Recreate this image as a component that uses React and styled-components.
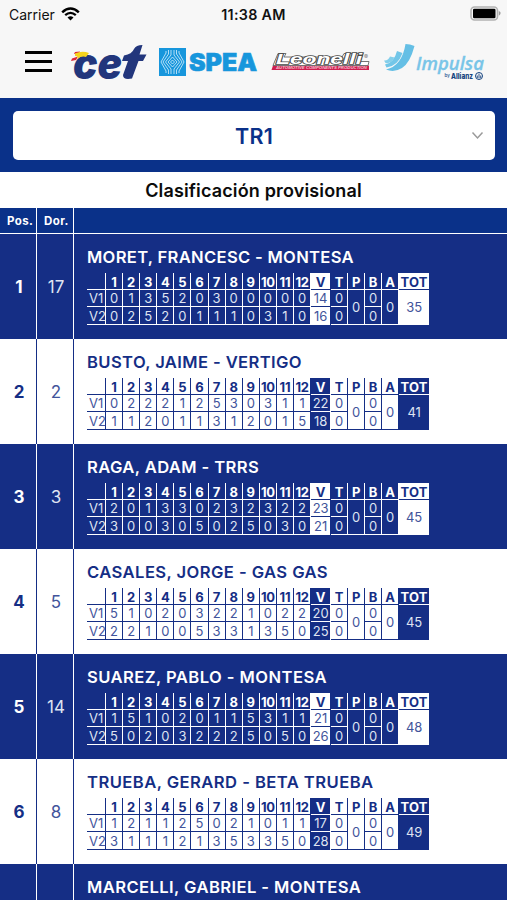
import {createGlobalStyle, styled} from 'styled-components'

const NAVY = '#152e85'
const BLUE = '#0a3189'

const GlobalStyle = createGlobalStyle`
  * {
    box-sizing: border-box;
  }

  body {
    margin: 0;
    background: #fff;
    font-family: Inter, 'Liberation Sans', sans-serif;
  }
`

const Screen = styled.div`
  width: 507px;
  height: 900px;
  overflow: hidden;
`

const StatusBar = styled.div`
  display: grid;
  grid-template-columns: 1fr auto 1fr;
  align-items: center;
  height: 28px;
  padding: 0 6px 0 9px;
  background: #f7f7f7;
  color: #111;
  font-size: 14px;
`

const Carrier = styled.div`
  display: flex;
  align-items: center;
  gap: 6px;
  height: 26px;

  svg {
    margin-bottom: 1px;
  }
`

const Clock = styled.div`
  margin-left: -3px;
  font-size: 14.3px;
  font-weight: 600;
  letter-spacing: 0.3px;
`

const Battery = styled.svg`
  justify-self: end;
  margin-bottom: 2px;
`

const LogoBar = styled.header`
  display: flex;
  align-items: flex-start;
  height: 70px;
  padding: 10px 0 0 25px;
  background: #f7f7f7;
`

const MenuButton = styled.button`
  display: flex;
  flex-direction: column;
  gap: 6px;
  width: 27px;
  margin: 13px 15px 0 0;
  padding: 0;
  border: 0;
  background: none;
  cursor: pointer;

  span {
    width: 27px;
    height: 3px;
    background: #000;
  }
`

const Logos = styled.svg`
  display: block;
`

const SelectBar = styled.div`
  height: 74px;
  padding: 13px 12px 0 13px;
  background: ${BLUE};
`

const Select = styled.div`
  display: grid;
  grid-template-columns: 1fr auto 1fr;
  align-items: center;
  height: 49px;
  padding: 0 11px;
  border-radius: 5px;
  background: #fff;
  color: ${BLUE};
  font-size: 21.5px;
  font-weight: 600;
  letter-spacing: 0.3px;
`

const Chevron = styled.svg`
  grid-column: 3;
  justify-self: end;
`

const SelectValue = styled.span`
  grid-column: 2;
`

const Title = styled.h1`
  height: 36px;
  margin: 0;
  color: #0b0b0b;
  font-size: 18px;
  font-weight: 600;
  letter-spacing: 0.15px;
  line-height: 37px;
  text-align: center;
`

const TableHead = styled.div`
  display: grid;
  grid-template-columns: 37px 37px 1fr;
  height: 26px;
  border-bottom: 1px solid #fff;
  background: ${BLUE};
  color: #fff;
  font-size: 11.5px;
  font-weight: 700;
  line-height: 26px;
`

const HeadCell = styled.div`
  padding-left: 7px;
  border-right: 1px solid #fff;
  letter-spacing: 0.4px;
`

const Row = styled.div`
  --bg: ${({$dark}) => ($dark ? NAVY : '#fff')};
  --fg: ${({$dark}) => ($dark ? '#fff' : NAVY)};
  --soft: ${({$dark}) => ($dark ? '#dfe4f2' : '#42549b')};
  --invert: ${({$dark}) => ($dark ? '#42549b' : '#dfe4f2')};

  display: grid;
  grid-template-columns: 37px 37px 1fr;
  height: 105px;
  background: var(--bg);
  color: var(--fg);
`

const NumberCell = styled.div`
  display: flex;
  align-items: center;
  justify-content: center;
  border-right: 1px solid var(--fg);
  color: ${({$bold}) => ($bold ? 'var(--fg)' : 'var(--soft)')};
  font-size: 17px;
  font-weight: ${({$bold}) => ($bold ? 700 : 400)};
  padding: 1px 0 0 2px;
`

const Rider = styled.div`
  padding: 13px 0 0 13px;
`

const Name = styled.h2`
  height: 26px;
  margin: 0;
  font-size: 16.6px;
  font-weight: 600;
  letter-spacing: ${({$spacing}) => $spacing}px;
  line-height: 21px;
  white-space: nowrap;
`

const Scores = styled.div`
  display: grid;
  grid-template-columns: 19px repeat(12, 17.1px) 20px repeat(4, 17px) 30px;
  grid-template-rows: 17px 17px 18px;
  width: 342px;
`

const Score = styled.div`
  display: flex;
  align-items: center;
  justify-content: center;
  grid-row: ${({$row, $tall}) => ($tall ? `${$row} / span 2` : $row)};
  grid-column: ${({$col}) => $col};
  border-right: 1px solid var(--fg);
  border-bottom: 1px solid var(--fg);
  color: var(--soft);
  font-size: 13px;
  line-height: 1;
  padding-top: 1px;
`

const HeadScore = styled(Score)`
  color: var(--fg);
  font-weight: 700;
  font-size: 13px;
  letter-spacing: ${({$small}) => ($small ? -0.2 : 0)}px;
  padding-top: 2px;
`

const LabelScore = styled(Score)`
  justify-content: flex-start;
  padding-left: 2px;
`

const Filled = styled(Score)`
  background: var(--fg);
  color: ${({$head}) => ($head ? 'var(--bg)' : 'var(--invert)')};
  font-weight: ${({$head}) => ($head ? 700 : 400)};
  border-right: 0;
  border-bottom-color: ${({$last}) => ($last ? 'var(--fg)' : 'var(--bg)')};
  margin-right: ${({$gap}) => ($gap ? 1 : 0)}px;
  letter-spacing: ${({$wide}) => ($wide ? 0.2 : 0)}px;
  padding-top: ${({$head}) => ($head ? 2 : 1)}px;
`

const riders = [
  {
    dorsal: 17,
    name: 'MORET, FRANCESC - MONTESA',
    spacing: 0.3,
    laps: [
      [0, 1, 3, 5, 2, 0, 3, 0, 0, 0, 0, 0],
      [0, 2, 5, 2, 0, 1, 1, 1, 0, 3, 1, 0],
    ],
    sums: [14, 16],
    total: 35,
  },
  {
    dorsal: 2,
    name: 'BUSTO, JAIME - VERTIGO',
    spacing: 0.38,
    laps: [
      [0, 2, 2, 2, 1, 2, 5, 3, 0, 3, 1, 1],
      [1, 1, 2, 0, 1, 1, 3, 1, 2, 0, 1, 5],
    ],
    sums: [22, 18],
    total: 41,
  },
  {
    dorsal: 3,
    name: 'RAGA, ADAM - TRRS',
    spacing: 0.38,
    laps: [
      [2, 0, 1, 3, 3, 0, 2, 3, 2, 3, 2, 2],
      [3, 0, 0, 3, 0, 5, 0, 2, 5, 0, 3, 0],
    ],
    sums: [23, 21],
    total: 45,
  },
  {
    dorsal: 5,
    name: 'CASALES, JORGE - GAS GAS',
    spacing: 0.42,
    laps: [
      [5, 1, 0, 2, 0, 3, 2, 2, 1, 0, 2, 2],
      [2, 2, 1, 0, 0, 5, 3, 3, 1, 3, 5, 0],
    ],
    sums: [20, 25],
    total: 45,
  },
  {
    dorsal: 14,
    name: 'SUAREZ, PABLO - MONTESA',
    spacing: 0.43,
    laps: [
      [1, 5, 1, 0, 2, 0, 1, 1, 5, 3, 1, 1],
      [5, 0, 2, 0, 3, 2, 2, 2, 5, 0, 5, 0],
    ],
    sums: [21, 26],
    total: 48,
  },
  {
    dorsal: 8,
    name: 'TRUEBA, GERARD - BETA TRUEBA',
    spacing: 0.44,
    laps: [
      [1, 2, 1, 1, 2, 5, 0, 2, 1, 0, 1, 1],
      [3, 1, 1, 1, 2, 1, 3, 5, 3, 3, 5, 0],
    ],
    sums: [17, 28],
    total: 49,
  },
  {
    name: 'MARCELLI, GABRIEL - MONTESA',
    spacing: 0.41,
  },
]

const zones = [1, 2, 3, 4, 5, 6, 7, 8, 9, 10, 11, 12]

const ScoreTable = ({laps, sums, total}) => (
  <Scores>
    <HeadScore $row={1} $col={1} />
    {zones.map((zone) => (
      <HeadScore key={zone} $row={1} $col={zone + 1} $small={zone > 9}>
        {zone}
      </HeadScore>
    ))}
    <Filled $row={1} $col={14} $head $gap>V</Filled>
    {['T', 'P', 'B', 'A'].map((letter, i) => (
      <HeadScore key={letter} $row={1} $col={15 + i}>
        {letter}
      </HeadScore>
    ))}
    <Filled $row={1} $col={19} $head $wide>TOT</Filled>

    {laps.map((lap, i) => [
      <LabelScore key={`label${i}`} $row={i + 2} $col={1}>{`V${i + 1}`}</LabelScore>,
      ...lap.map((points, zone) => (
        <Score key={`${i}-${zone}`} $row={i + 2} $col={zone + 2}>
          {points}
        </Score>
      )),
      <Filled key={`sum${i}`} $row={i + 2} $col={14} $gap $last={i === 1}>{sums[i]}</Filled>,
      <Score key={`t${i}`} $row={i + 2} $col={15}>0</Score>,
      <Score key={`b${i}`} $row={i + 2} $col={17}>0</Score>,
    ])}
    <Score $row={2} $col={16} $tall>0</Score>
    <Score $row={2} $col={18} $tall>0</Score>
    <Filled $row={2} $col={19} $tall $last>{total}</Filled>
  </Scores>
)

const SponsorLogos = () => (
  <Logos width="430" height="50" viewBox="67 38 430 50">
    {/* cet */}
    <text x="73" y="78.5" fontFamily="Inter" fontSize="43" fontWeight="900" fontStyle="italic" fill="#22367c" textLength="49" lengthAdjust="spacingAndGlyphs">ce</text>
    <path d="M142.5 45 Q136 45 134 49 Q132 54 124 55.5 L122 61 H128 L123 75 Q123 79 128 79 L132 78.5 L138.5 61 H143 L146.5 54.5 H139.5 Z" fill="#22367c" />
    <path d="M75 52 L80 51.5 L79 53.5 L74 54 Z M72 58.5 L78 56.5 L76 60 L71 61 Z" fill="#dc2637" />
    <path d="M75 53.5 Q82 50.5 89 53 L86 57 Q82 55.5 77 59 Q79 56 75 56 Z" fill="#f6d51c" />

    {/* spea */}
    <rect x="159" y="48" width="27" height="28" fill="#1796dc" />
    <g fill="none" stroke="#d9f0fc" strokeWidth="0.8">
      <path d="M172.5 57 L177 62 L172.5 67 L168 62 Z M172.5 60 L174.5 62 L172.5 64 L170.5 62 Z" />
      <path d="M171 50 V55 L165.5 62 L171 69 V74 M168.5 50 V54 L163 62 L168.5 70 V74 M166 51 V53 L161 62 L166 71 V73" />
      <path d="M174 50 V55 L179.5 62 L174 69 V74 M176.5 50 V54 L182 62 L176.5 70 V74 M179 51 V53 L184 62 L179 71 V73" />
    </g>
    <text x="189" y="70.5" fontFamily="Inter" fontSize="24" fontWeight="900" fill="#1796dc" stroke="#1796dc" strokeWidth="0.6" textLength="68" lengthAdjust="spacingAndGlyphs">SPEA</text>

    {/* leonelli */}
    <path d="M273 65.5 H369 V70 H271.5 Z" fill="#ce1f4f" />
    <text x="276" y="69.4" fontFamily="Liberation Sans" fontSize="3.6" fontWeight="700" fontStyle="italic" fill="#f3c3d1" textLength="91" lengthAdjust="spacingAndGlyphs">AUTOMOTIVE COMPONENTS PRODUCTION</text>
    <path d="M278 53.5 H286 L284 57 H342 L344 53.5 H363 L360 61.5 H369 L368 65.5 H273 Z" fill="#fff" stroke="#666" strokeWidth="0.9" />
    <text x="276" y="64.3" fontFamily="Liberation Sans" fontSize="14" fontWeight="700" fontStyle="italic" fill="#fff" stroke="#4a4a4a" strokeWidth="1.5" paintOrder="stroke" textLength="86" lengthAdjust="spacingAndGlyphs">Leonelli</text>
    <text x="364" y="59" fontFamily="Inter" fontSize="6" fill="#777">®</text>

    {/* impulsa */}
    <path d="M405.5 44 Q410 44 414.5 46 Q410 63 402 68 Q394 73 386 69.5 Q402 66 405.5 44 Z" fill="#65bfe5" />
    <path d="M397 51 L402.5 53 Q398 66 386.5 67.5 L385 64.5 Q394 63 397 51 Z" fill="#72c6e8" />
    <path d="M390 56.5 L394.5 57.5 Q391 64 385.5 63 L384 60.5 Q388 61 390 56.5 Z" fill="#84cfeb" />
    <text x="416" y="69.5" fontFamily="Open Sans" fontSize="18.5" fontWeight="600" fontStyle="italic" fill="#79c5e8" stroke="#79c5e8" strokeWidth="0.3" textLength="68" lengthAdjust="spacingAndGlyphs">Impulsa</text>
    <text x="444.5" y="77" fontFamily="Inter" fontSize="4.5" fontWeight="600" fill="#2b5a95">by</text>
    <text x="451" y="79" fontFamily="Inter" fontSize="7.4" fontWeight="800" fill="#164480" textLength="22" lengthAdjust="spacingAndGlyphs">Allianz</text>
    <circle cx="479" cy="76" r="3.5" fill="none" stroke="#164480" strokeWidth="1" />
    <path d="M477.3 78 V75.5 M479 78.3 V73.7 M480.7 78 V75.5" stroke="#164480" strokeWidth="0.9" />
  </Logos>
)

const App = () => {
  return (
    <Screen>
      <GlobalStyle />
      <StatusBar>
        <Carrier>
          Carrier
          <svg width="19" height="14" viewBox="0 0 19 14">
            <path d="M1.2 5.3 Q9.5 -2.3 17.8 5.3" fill="none" stroke="#000" strokeWidth="2.5" />
            <path d="M4.2 8.2 Q9.5 3.5 14.8 8.2" fill="none" stroke="#000" strokeWidth="2.3" />
            <path d="M9.5 13.5 L6.5 10.5 Q9.5 8.1 12.5 10.5 Z" fill="#000" />
          </svg>
        </Carrier>
        <Clock>11:38 AM</Clock>
        <Battery width="31" height="15" viewBox="0 0 31 15">
          <rect x="1" y="1" width="26.5" height="13" rx="3.5" fill="#f7f7f7" stroke="#b2b2b2" strokeWidth="1.6" />
          <rect x="3" y="2.8" width="22.5" height="9.4" rx="1.3" fill="#000" />
          <path d="M28.8 5 Q31 6 30.6 7.3 Q30.6 8.6 28.8 9.8 Z" fill="#9c9c9c" />
        </Battery>
      </StatusBar>

      <LogoBar>
        <MenuButton aria-label="Menu">
          <span />
          <span />
          <span />
        </MenuButton>
        <SponsorLogos />
      </LogoBar>

      <SelectBar>
        <Select>
          <SelectValue>TR1</SelectValue>
          <Chevron width="13" height="9" viewBox="0 0 13 9">
            <path d="M1.5 1.5 L6.5 7 L11.5 1.5" fill="none" stroke="#9a9a9a" strokeWidth="1.5" />
          </Chevron>
        </Select>
      </SelectBar>

      <Title>Clasificación provisional</Title>

      <TableHead>
        <HeadCell>Pos.</HeadCell>
        <HeadCell>Dor.</HeadCell>
      </TableHead>

      {riders.map((rider, i) => (
        <Row key={rider.name} $dark={i % 2 === 0}>
          <NumberCell $bold>{rider.laps && i + 1}</NumberCell>
          <NumberCell>{rider.dorsal}</NumberCell>
          <Rider>
            <Name $spacing={rider.spacing}>{rider.name}</Name>
            {rider.laps && <ScoreTable {...rider} />}
          </Rider>
        </Row>
      ))}
    </Screen>
  )
}

export default App
